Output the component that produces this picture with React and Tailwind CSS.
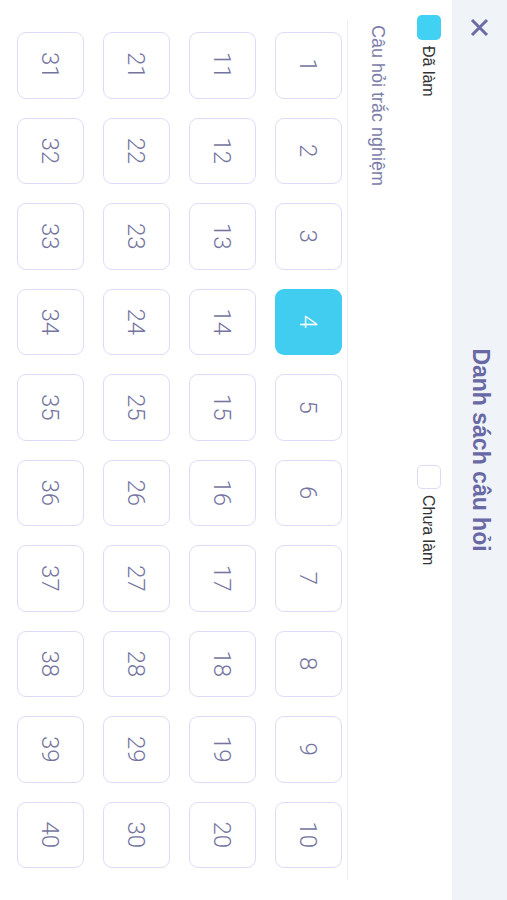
import React from "react";

const nums = Array.from({ length: 40 }, (_, i) => i + 1);

export default function App() {
  return (
    <div className="w-[507px] h-[900px] overflow-hidden bg-white">
      <div
        className="w-[900px] h-[507px] origin-top-left translate-x-[507px] rotate-90 bg-white flex flex-col"
        style={{ fontFamily: '"Liberation Sans", Arial, sans-serif' }}
      >
        {/* header */}
        <div className="h-[55px] shrink-0 bg-[#f0f4f8] grid grid-cols-[55px_1fr_55px] items-center pb-[3px]">
          <div className="flex items-center justify-center pt-[3px]">
            <svg width="19" height="19" viewBox="0 0 19 19" fill="none">
              <path d="M2 2 L17 17 M17 2 L2 17" stroke="#6b6ba6" strokeWidth="3" strokeLinecap="butt" />
            </svg>
          </div>
          <div className="text-center text-[23px] font-bold text-[#6868a4] leading-none">
            Danh sách câu hỏi
          </div>
          <div />
        </div>

        {/* legend */}
        <div className="mt-[10px] grid grid-cols-2 h-[24px]">
          <div className="flex items-center gap-[6px] pl-[15px]">
            <div className="w-[25px] h-[24px] rounded-[5px] bg-[#41d1f2]" />
            <span className="text-[16px] leading-[24px] text-[#333333] pt-[2px]">Đã làm</span>
          </div>
          <div className="flex items-center gap-[6px] pl-[15px]">
            <div className="w-[24px] h-[24px] rounded-[5px] border-[1.5px] border-[#dcdbf6] bg-white" />
            <span className="text-[16px] leading-[24px] text-[#333333] pt-[2px]">Chưa làm</span>
          </div>
        </div>

        {/* section title */}
        <div className="mt-[28px] pl-[25px] text-[18px] leading-[24px] text-[#7c7caa]">
          Câu hỏi trắc nghiệm
        </div>

        {/* grid */}
        <div className="mt-[18px] mx-[20px] border-t border-[#efeff6] pt-[5px] px-[12px]">
          <div className="grid grid-cols-10 gap-x-[19px] gap-y-[19px]">
            {nums.map((n) =>
              n === 4 ? (
                <div
                  key={n}
                  className="h-[67px] rounded-[9px] bg-[#41cdf0] flex items-center justify-center text-white text-[24px] font-light"
                  style={{ fontFamily: 'Roboto, "Liberation Sans", sans-serif' }}
                >
                  {n}
                </div>
              ) : (
                <div
                  key={n}
                  className="h-[67px] rounded-[9px] border-[1.5px] border-[#dddcf7] bg-white flex items-center justify-center text-[#74749f] text-[24px] font-light"
                  style={{ fontFamily: 'Roboto, "Liberation Sans", sans-serif' }}
                >
                  {n}
                </div>
              )
            )}
          </div>
        </div>
      </div>
    </div>
  );
}
